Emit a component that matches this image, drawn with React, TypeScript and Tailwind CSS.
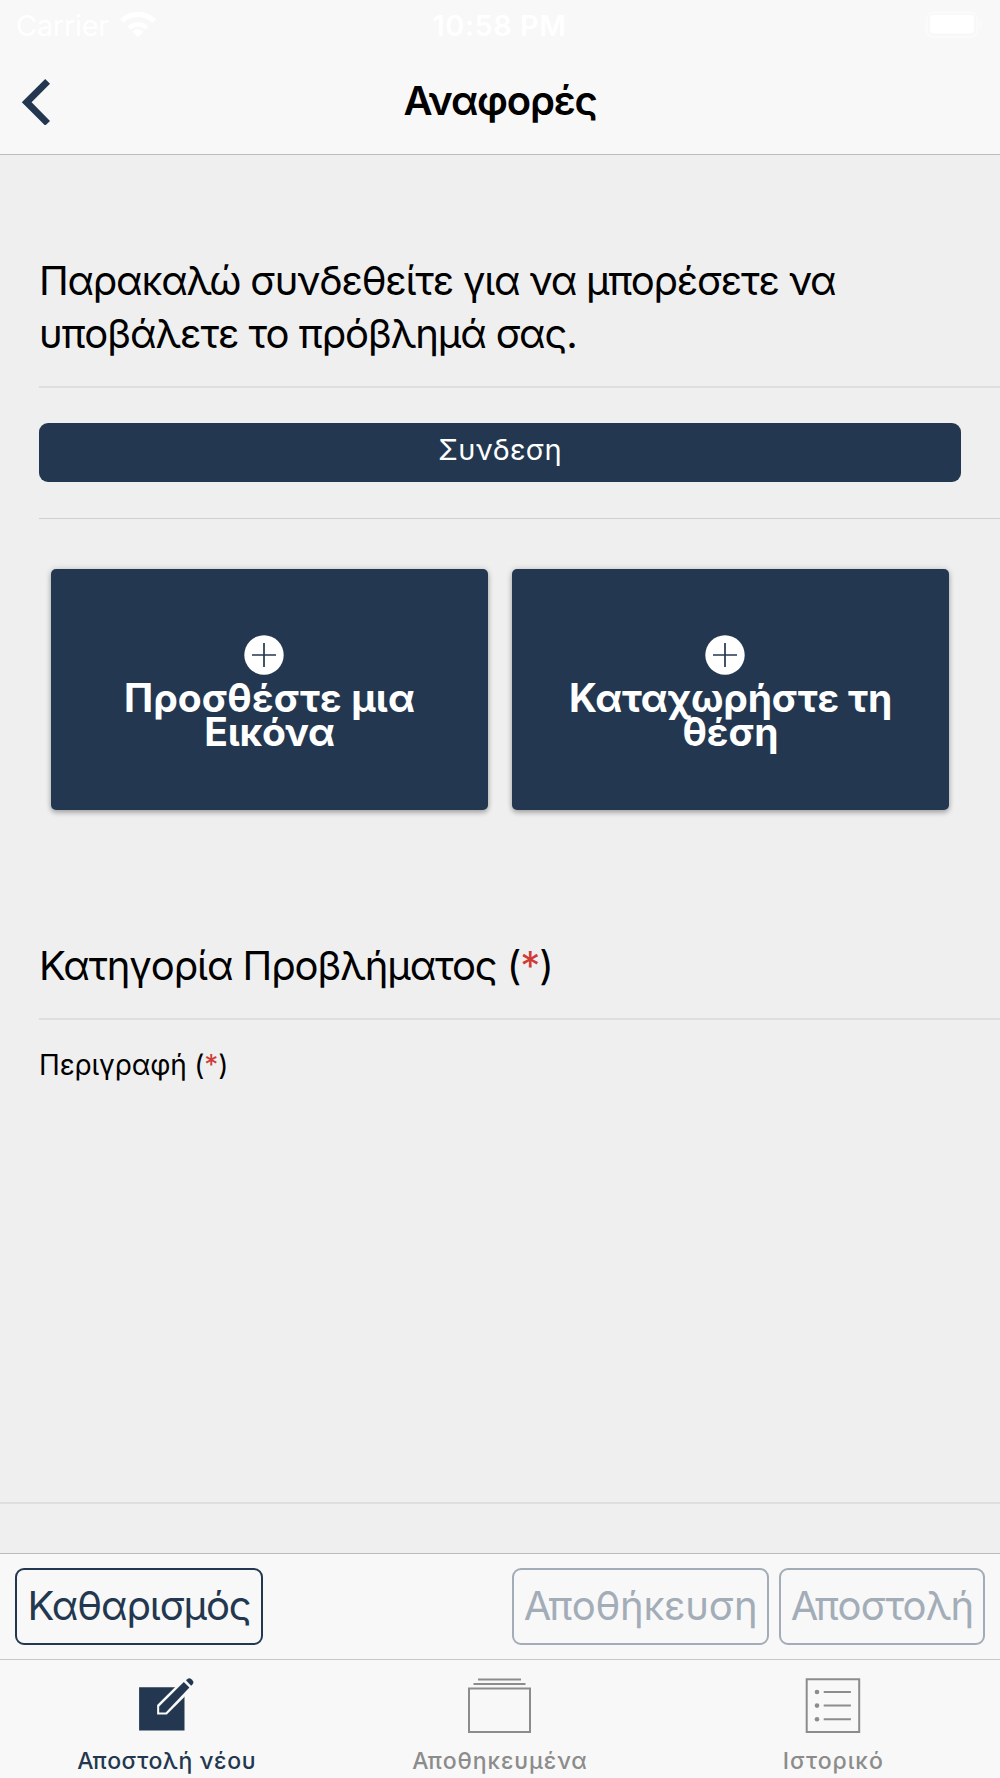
import React from 'react';

const StatusBar = () => (
    <div className="flex h-[50px] items-center justify-between pl-[16px] pr-[17px] text-[29px] leading-none text-white">
        <div className="flex flex-1 items-center gap-[10px]">
            <span className="tracking-[-0.3px]">Carrier</span>
            <svg width="38" height="28" viewBox="0 0 38 28" fill="#fff" className="-mt-[3px]">
                <path d="M19 27l-5.600-5.600a8.500 8.500 0 0 1 11.200 0z" />
                <path d="M8.600 16.400a15.200 15.200 0 0 1 20.800 0l-3.100 3.200a10.700 10.700 0 0 0-14.600 0z" />
                <path d="M1 9a26 26 0 0 1 36 0l-3.700 3.700a20.600 20.600 0 0 0-28.600 0z" />
            </svg>
        </div>
        <span className="font-semibold tracking-[0.45px]">10:58 PM</span>
        <div className="flex flex-1 justify-end">
            <svg width="59" height="28" viewBox="-4 0 59 28">
                <rect x="-1.500" y="1.500" width="51" height="24.500" rx="7" fill="none" stroke="#fbfbfb" strokeWidth="2" />
                <rect x="2" y="4" width="44" height="18.500" rx="4" fill="#fff" />
                <path d="M52 9.500c3 1.200 3 7.300 0 8.500z" fill="#fbfbfb" />
            </svg>
        </div>
    </div>
);

const Header = () => (
    <header className="h-[155px] border-b border-[#bcbcbe] bg-[#f8f8f8]">
        <StatusBar />
        <div className="grid h-[102px] grid-cols-3 items-center">
            <button type="button" className="flex pl-[21px]">
                <svg width="30" height="48" viewBox="0 0 30 48" fill="#233850">
                    <path d="M.8 25.300 24.200 2l4.800 4.700-18.400 18.600L29 43.900l-4.800 4.700z" />
                </svg>
            </button>
            <h1 className="text-center text-[40px] font-semibold leading-none tracking-[-1.2px] text-black">Αναφορές</h1>
        </div>
    </header>
);

const Required = () => <span className="text-[#cf3c36]">*</span>;

type Line = { text: string; className: string };

const ActionCard = ({ lines }: { lines: Line[] }) => (
    <button
        type="button"
        className="flex h-[241px] flex-1 flex-col items-center rounded-[5px] bg-[#233850] pt-[66px] shadow-[0_3px_5px_rgba(0,0,0,0.24),0_0_6px_rgba(0,0,0,0.16)]"
    >
        <svg width="40" height="40" viewBox="0 0 40 40" className="mr-[11px]">
            <circle cx="20" cy="20" r="19.700" fill="#fff" />
            <path d="M20 8v24M8 20h24" stroke="#233850" strokeWidth="1.700" />
        </svg>
        <span className="mt-[6px] text-[39px] font-bold leading-[33.7px] text-white">
            {lines.map((line) => (
                <span key={line.text} className={`block whitespace-nowrap ${line.className}`}>{line.text}</span>
            ))}
        </span>
    </button>
);

const CreateIcon = () => (
    <svg width="64" height="60" viewBox="0.500 0 64 60" fill="#233850">
        <path d="M4.600 11.300H50v43.200H4.600z" />
        <path d="M22.600 38.600v-9.500L48 3.700l9.700 9.500-25.400 25.400z" fill="#f8f8f8" />
        <path d="M24.700 36.400v-6L49.300 6l5.600 5.500L31.200 36.400z" />
        <path d="M51.600 4.400l1.100-1.100a3 3 0 0 1 4.200 0l1 1a3 3 0 0 1 0 4.200l-1.200 1.200z" />
    </svg>
);

const AlbumsIcon = () => (
    <svg width="64" height="60" viewBox="0.500 0 64 60" fill="none" stroke="#8c8c8c" strokeWidth="2">
        <path d="M1.500 12.500h61v43.500h-61zM6 8h52M10.500 3.500h43" />
    </svg>
);

const ListIcon = () => (
    <svg width="64" height="60" viewBox="0 0 64 60" fill="none" stroke="#8c8c8c" strokeWidth="2">
        <path d="M5.700 3.200h52.500v52.800h-52.500zM22.700 16h27.200M22.700 29.600h27.200M22.700 43.200h27.200" />
        <g fill="#8c8c8c" stroke="none">
            <circle cx="16" cy="16" r="2.300" />
            <circle cx="16" cy="29.600" r="2.300" />
            <circle cx="16" cy="43.200" r="2.300" />
        </g>
    </svg>
);

const tabs = [
    { label: 'Αποστολή νέου', icon: <CreateIcon />, className: 'text-[#233850] tracking-[0.6px]' },
    { label: 'Αποθηκευμένα', icon: <AlbumsIcon />, className: 'text-[#8c8c8c] tracking-[0.9px]' },
    { label: 'Ιστορικό', icon: <ListIcon />, className: 'text-[#8c8c8c] tracking-[1px]' },
];

const App = () => {
    return (
        <div className="flex h-[1778px] w-[1000px] flex-col overflow-hidden bg-[#efefef] font-['Inter','Noto_Sans',sans-serif] text-black">
            <Header />

            <main className="flex flex-1 flex-col">
                <div className="ml-[39px] border-b-2 border-[#dedede] pb-[26px] pt-[99px] text-[40px] leading-[53px]">
                    <span className="block tracking-[-1.24px]">Παρακαλώ συνδεθείτε για να μπορέσετε να</span>
                    <span className="block tracking-[-1.08px]">υποβάλετε το πρόβλημά σας.</span>
                </div>

                <div className="ml-[39px] h-[131px] border-b border-[#cfced3] pr-[39px] pt-[35px]">
                    <button
                        type="button"
                        className="flex h-[58.500px] w-full items-center justify-center rounded-[9px] bg-[#233850] pb-[5px] text-[29px] leading-none tracking-[0.2px] text-white"
                    >
                        Συνδεση
                    </button>
                </div>

                <div className="flex gap-[24px] px-[51px] pt-[50px]">
                    <ActionCard
                        lines={[
                            { text: 'Προσθέστε μια', className: 'tracking-[0.1px]' },
                            { text: 'Εικόνα', className: 'tracking-[-0.3px]' },
                        ]}
                    />
                    <ActionCard
                        lines={[
                            { text: 'Καταχωρήστε τη', className: 'tracking-[-0.2px]' },
                            { text: 'θέση', className: 'tracking-[0px]' },
                        ]}
                    />
                </div>

                <div className="ml-[39px] mt-[129px] border-b-2 border-[#dedede] pb-[26px] text-[40px] leading-[53px] tracking-[-1.1px]">
                    Κατηγορία Προβλήματος (<Required />)
                </div>

                <div className="flex-1 border-b-2 border-[#dedede] pl-[39px] pt-[28px] text-[28px] leading-[34px] tracking-[-0.15px]">
                    Περιγραφή (<Required />)
                </div>
                <div className="h-[49px]" />
            </main>

            <footer className="bg-[#f8f8f8]">
                <div className="flex h-[106px] justify-between border-t border-[#bcbcbe] px-[15px] pt-[14px] text-[40px] leading-none">
                    <button type="button" className="flex h-[77px] w-[248px] items-center justify-center rounded-[9px] border-2 border-[#233850] pb-[1px] tracking-[-1.1px] text-[#233850]">
                        Καθαρισμός
                    </button>
                    <div className="flex gap-[10px]">
                        <button type="button" disabled className="flex h-[77px] w-[257px] items-center justify-center rounded-[9px] border-2 border-[#a3adb8] pb-[1px] tracking-[-0.3px] text-[#a3adb8]">
                            Αποθήκευση
                        </button>
                        <button type="button" disabled className="flex h-[77px] w-[206px] items-center justify-center rounded-[9px] border-2 border-[#a3adb8] pb-[1px] tracking-[-0.85px] text-[#a3adb8]">
                            Αποστολή
                        </button>
                    </div>
                </div>

                <nav className="grid h-[119px] grid-cols-3 border-t border-[#c8c8c9]">
                    {tabs.map((tab) => (
                        <button type="button" key={tab.label} className="flex flex-col items-center pt-[16px]">
                            {tab.icon}
                            <span className={`mt-[11px] text-[23px] font-medium leading-[28px] ${tab.className}`}>{tab.label}</span>
                        </button>
                    ))}
                </nav>
            </footer>
        </div>
    );
};

export default App;
